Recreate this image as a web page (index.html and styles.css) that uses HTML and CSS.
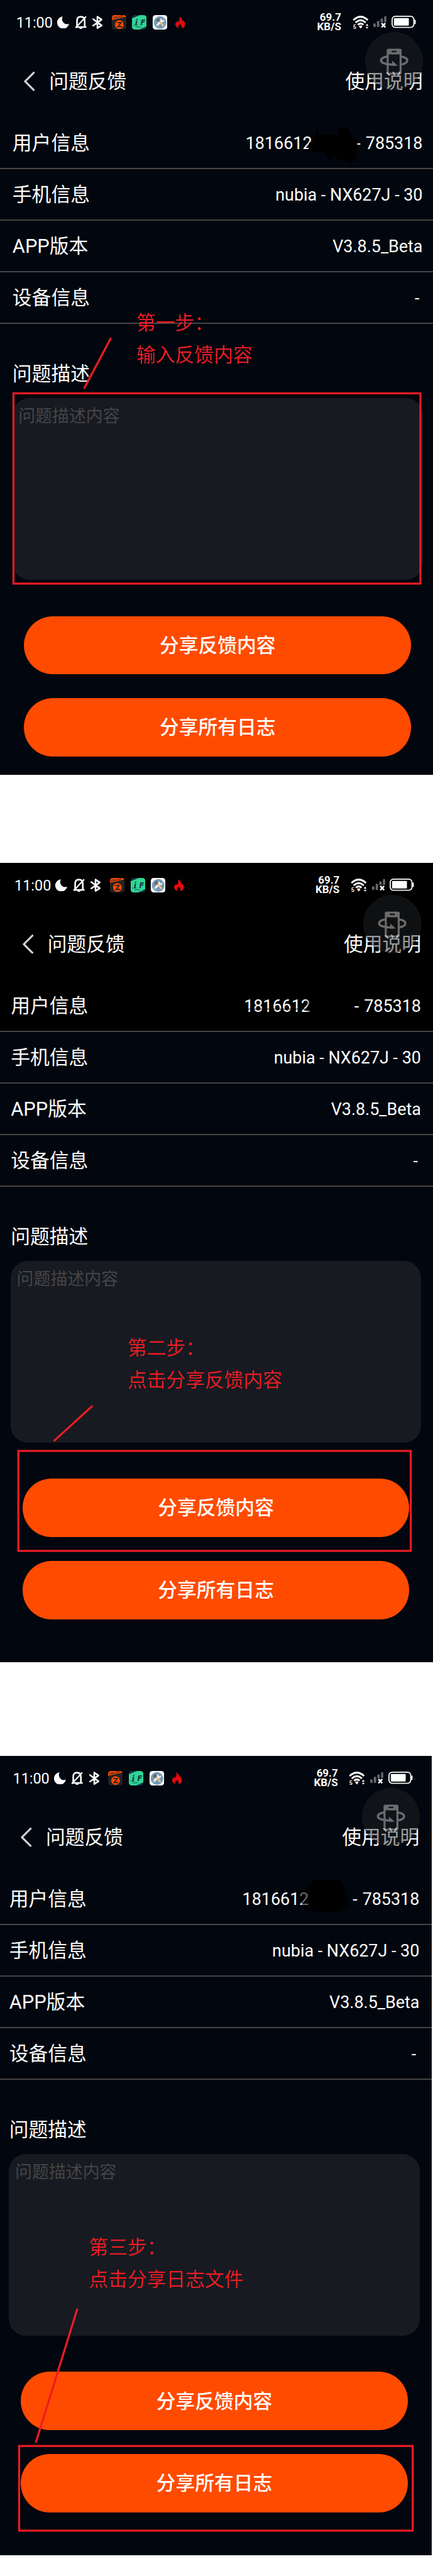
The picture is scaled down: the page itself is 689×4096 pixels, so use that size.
FILE: index.html
```html
<!DOCTYPE html>
<html lang="zh-CN">
<head>
<meta charset="utf-8">
<title>问题反馈</title>
<link rel="stylesheet" href="styles.css">
</head>
<body>
<svg class="defs" aria-hidden="true">
  <defs>
    <symbol id="moon" viewBox="0 0 30 30"><path d="M14 .5A15 15 0 1 0 29.500 18.500A12.500 12.500 0 0 1 14 .5Z" fill="#fff"/></symbol>
    <symbol id="mute" viewBox="0 0 30 33"><path d="M5.500 27V13C5.500 6 9 2.500 15 2.500S24.500 6 24.500 13V27M2 28H29" fill="none" stroke="#fff" stroke-width="4"/><path d="M28 2L2 30" stroke="#fff" stroke-width="3.400"/><path d="M10.500 29h9a4.500 4 0 0 1-9 0Z" fill="#fff"/></symbol>
    <symbol id="bt" viewBox="0 0 27 33"><path d="M2 8.500L23 24L12.500 30.500V2.500L23 9.500L2 24.500" fill="none" stroke="#fff" stroke-width="4" stroke-linejoin="round" stroke-linecap="round"/></symbol>
    <symbol id="zapp" viewBox="0 0 36 36"><clipPath id="zc"><rect width="36" height="36" rx="7"/></clipPath><g clip-path="url(#zc)"><rect width="36" height="36" fill="#232323"/><path d="M0 0H36V4L0 12Z" fill="#ff4b00"/><text x="2" y="9.500" font-size="6.500" font-weight="700" fill="#232323" textLength="27" transform="rotate(-11 2 9)">ZEBLAZE</text><circle cx="18.500" cy="23.500" r="10.800" fill="#ff4b00"/><path d="M13 18.500H23L15 28.500H25" fill="none" stroke="#232323" stroke-width="2.800"/></g></symbol>
    <symbol id="ifapp" viewBox="0 0 36 36"><clipPath id="ic"><rect width="36" height="36" rx="7"/></clipPath><g clip-path="url(#ic)"><rect width="36" height="36" fill="#17344a"/><path d="M0 8L20 0H36V28L18 36H0Z" fill="#2fd594"/><text x="8" y="25" font-size="20" font-weight="900" font-style="italic" fill="#17344a" textLength="24">iF</text><path d="M4 25H15M9 29.500H23" stroke="#17344a" stroke-width="1.200"/></g></symbol>
    <symbol id="tools" viewBox="0 0 36 36"><rect width="36" height="36" rx="7" fill="#fff"/><circle cx="18.300" cy="18.500" r="15.700" fill="#7699b5"/><path d="M11 25L22 14" stroke="#f1f3f5" stroke-width="5" stroke-linecap="round"/><path d="M21 7.500C18 10 18.500 16 22 17.500C26 19 29.500 16 28.500 11L25 14L22 12Z" fill="#f1f3f5"/><circle cx="11" cy="25.500" r="1.400" fill="#7699b5"/><path d="M15 13L27 27" stroke="#f5c27b" stroke-width="4"/><path d="M8 15C9 10 13 7 18 7L15 10L18 14L13.500 17L11.500 14Z" fill="#5f6468"/></symbol>
    <symbol id="fire" viewBox="0 0 25 30"><path d="M10 0C16 4 18 7 17.500 12L20 10C23 14 25 18 24 22C23 26 20 29 16 30C17 25 15 21 11.500 19C7 22 6 26 8.500 30C4 28 0 24 0 19C1 14 4 15 6 11C6 13 7 14 8 14C11 9 11 5 10 0Z" fill="#e60a0e"/></symbol>
    <symbol id="wifi" viewBox="0 0 40 33"><g fill="none" stroke="#fff" stroke-width="4.600"><path d="M2 11Q20-6 38 11"/><path d="M7.500 17.200Q20 5.500 32.500 17.200"/><path d="M13 22.500Q20 16 27 22.500"/></g><path d="M15.500 26.500Q20 22 24.500 26.500L20 32Z" fill="#fff"/><text x="1" y="32" font-size="14" font-weight="700" fill="#fff">5</text><path d="M32.500 25L36 20L39.500 25ZM32.500 27.500L36 32.500L39.500 27.500Z" fill="#fff"/></symbol>
    <symbol id="signal" viewBox="0 0 33 31"><g fill="#66686c"><rect x="0" y="19" width="6" height="9" rx="2"/><rect x="9" y="13" width="6" height="15" rx="2"/><rect x="18" y="7" width="6" height="9" rx="2"/><rect x="27" y="1" width="5.500" height="15" rx="2"/></g><path d="M20.500 18.500L30 28.500M30 18.500L20.500 28.500" stroke="#fff" stroke-width="4"/></symbol>
    <symbol id="battery" viewBox="0 0 61 31"><rect x="1.500" y="1.500" width="54" height="27.500" rx="8" fill="none" stroke="#fff" stroke-width="2.800"/><rect x="6" y="6" width="37" height="18.500" rx="2" fill="#fff"/><path d="M56 10h4v10.500h-4Z" fill="#fff"/></symbol>
    <symbol id="back" viewBox="0 0 27 48"><path d="M24.500 2.500L3 24L24.500 45.500" fill="none" stroke="#cfcfd1" stroke-width="5" stroke-linecap="round" stroke-linejoin="round"/></symbol>
    <symbol id="rotate" viewBox="0 0 144 144"><circle cx="72" cy="72" r="71.500" fill="#313538" fill-opacity=".3" stroke="#1b1f25"/><g opacity=".38"><g fill="none" stroke="#fff"><path d="M56 61C46 61.500 39.500 65.500 39.500 70.500C39.500 76.500 51 80.500 74 81" stroke-width="5.500"/><path d="M88 61C98 61.500 104.500 65.500 104.500 70.500C104.500 75.500 98 79 89 80.500" stroke-width="5.500"/><rect x="56" y="44" width="32" height="59" rx="2" stroke-width="5"/></g><path d="M55 43H66V50H78V43H89V55.500H55Z" fill="#fff"/><path d="M66 50H78V55H66Z" fill="#fff"/><path d="M67 71L81 83.500H67Z" fill="#fff"/></g></symbol>
  </defs>
</svg>

<section class="screen screen-1">
  <div class="content">
    <header class="status">
      <span class="time">11:00</span>
      <svg class="i-moon"><use href="#moon"/></svg><svg class="i-mute"><use href="#mute"/></svg><svg class="i-bt"><use href="#bt"/></svg><svg class="i-app first"><use href="#zapp"/></svg><svg class="i-app"><use href="#ifapp"/></svg><svg class="i-app"><use href="#tools"/></svg><svg class="i-fire"><use href="#fire"/></svg>
      <span class="speed">69.7<br>KB/S</span>
      <svg class="i-wifi"><use href="#wifi"/></svg><svg class="i-signal"><use href="#signal"/></svg><svg class="i-battery"><use href="#battery"/></svg>
    </header>
    <nav class="appbar"><svg class="i-back"><use href="#back"/></svg><h1>问题反馈</h1><a class="help">使用说明</a></nav>
    <svg class="float"><use href="#rotate"/></svg>
    <div class="row"><span>用户信息</span><span class="value account">1816612<i class="masked"></i> - 785318</span></div>
    <div class="row"><span>手机信息</span><span class="value">nubia - NX627J - 30</span></div>
    <div class="row"><span>APP版本</span><span class="value">V3.8.5_Beta</span></div>
    <div class="row"><span>设备信息</span><span class="value dash">-</span></div>
    <h2>问题描述</h2>
    <div class="field">问题描述内容</div>
    <div class="actions"><div class="button">分享反馈内容</div><div class="button">分享所有日志</div></div>
  </div>
  <svg class="marks" viewBox="0 0 1074 1921">
    <path d="M765 375L767 354L777 350L779 334L784 334L790 312H793L788 334H839L841 318Q856 312 867 322L876 348L886 346L888 366L881 395Q871 412 860 403L852 397L838 396L833 383L816 398L806 380L800 376Z" fill="#000" fill-opacity=".94"/>
    <path d="M274.500 840L209.500 962" class="line"/>
    <rect x="33.500" y="975.500" width="1010" height="472" class="frame"/>
  </svg>
  <p class="note">第一步：<br>输入反馈内容</p>
</section>

<section class="screen screen-2">
  <div class="content">
    <header class="status">
      <span class="time">11:00</span>
      <svg class="i-moon"><use href="#moon"/></svg><svg class="i-mute"><use href="#mute"/></svg><svg class="i-bt"><use href="#bt"/></svg><svg class="i-app first"><use href="#zapp"/></svg><svg class="i-app"><use href="#ifapp"/></svg><svg class="i-app"><use href="#tools"/></svg><svg class="i-fire"><use href="#fire"/></svg>
      <span class="speed">69.7<br>KB/S</span>
      <svg class="i-wifi"><use href="#wifi"/></svg><svg class="i-signal"><use href="#signal"/></svg><svg class="i-battery"><use href="#battery"/></svg>
    </header>
    <nav class="appbar"><svg class="i-back"><use href="#back"/></svg><h1>问题反馈</h1><a class="help">使用说明</a></nav>
    <svg class="float"><use href="#rotate"/></svg>
    <div class="row"><span>用户信息</span><span class="value account">1816612<i class="masked"></i> - 785318</span></div>
    <div class="row"><span>手机信息</span><span class="value">nubia - NX627J - 30</span></div>
    <div class="row"><span>APP版本</span><span class="value">V3.8.5_Beta</span></div>
    <div class="row"><span>设备信息</span><span class="value dash">-</span></div>
    <h2>问题描述</h2>
    <div class="field">问题描述内容</div>
    <div class="actions"><div class="button">分享反馈内容</div><div class="button">分享所有日志</div></div>
  </div>
  <svg class="marks" viewBox="0 0 1074 1983">
    <defs><linearGradient id="fade"><stop offset="0" stop-color="#000" stop-opacity="0"/><stop offset="1" stop-color="#000"/></linearGradient></defs>
    <rect x="758" y="330" width="20" height="50" fill="url(#fade)"/>
    <path d="M608 362.500H770" stroke="#000" stroke-width="1.500"/>
    <path d="M228 1348L135 1433" class="line"/>
    <rect x="45.500" y="1458.500" width="974" height="248" class="frame"/>
  </svg>
  <p class="note">第二步：<br>点击分享反馈内容</p>
</section>

<section class="screen screen-3">
  <div class="content">
    <header class="status">
      <span class="time">11:00</span>
      <svg class="i-moon"><use href="#moon"/></svg><svg class="i-mute"><use href="#mute"/></svg><svg class="i-bt"><use href="#bt"/></svg><svg class="i-app first"><use href="#zapp"/></svg><svg class="i-app"><use href="#ifapp"/></svg><svg class="i-app"><use href="#tools"/></svg><svg class="i-fire"><use href="#fire"/></svg>
      <span class="speed">69.7<br>KB/S</span>
      <svg class="i-wifi"><use href="#wifi"/></svg><svg class="i-signal"><use href="#signal"/></svg><svg class="i-battery"><use href="#battery"/></svg>
    </header>
    <nav class="appbar"><svg class="i-back"><use href="#back"/></svg><h1>问题反馈</h1><a class="help">使用说明</a></nav>
    <svg class="float"><use href="#rotate"/></svg>
    <div class="row"><span>用户信息</span><span class="value account">1816612<i class="masked"></i> - 785318</span></div>
    <div class="row"><span>手机信息</span><span class="value">nubia - NX627J - 30</span></div>
    <div class="row"><span>APP版本</span><span class="value">V3.8.5_Beta</span></div>
    <div class="row"><span>设备信息</span><span class="value dash">-</span></div>
    <h2>问题描述</h2>
    <div class="field">问题描述内容</div>
    <div class="actions"><div class="button">分享反馈内容</div><div class="button">分享所有日志</div></div>
  </div>
  <svg class="marks" viewBox="0 0 1074 1983">
    <path d="M738 336L758 330L764 320L776 316V304L790 308H849L851 320L857 322V345L866 352V378L838 388V389H768Q756 386 750 370Z" fill="#000" fill-opacity=".6"/>
    <path d="M774 305L790 308H840L849 320L855 322V365L838 384H785L770 375V320L776 316Z" fill="#000" fill-opacity=".85"/>
    <path d="M191.500 1373L89.500 1701" class="line"/>
    <rect x="47.500" y="1711.500" width="977" height="210" class="frame"/>
  </svg>
  <p class="note">第三步：<br>点击分享日志文件</p>
</section>
</body>
</html>
```

FILE: styles.css
```css
/* 1rem equals 100 design pixels */
html {
  font-size: 64.11px;
}

body {
  margin: 0;
  background: #fff;
  color: #fff;
  font-family: Roboto, "Noto Sans CJK SC", sans-serif;
  height: 63.89rem;
  overflow: hidden;
}

.defs {
  display: block;
  width: 0;
  height: 0;
}

.defs text {
  font-family: Roboto, sans-serif;
}

.screen {
  position: relative;
  overflow: hidden;
  background: #02060e;
}

.screen-1 {
  height: 19.21rem;
  margin-bottom: 2.19rem;
}

.screen-2 {
  height: 19.83rem;
  margin-bottom: 2.32rem;
  background: linear-gradient(#000 4.16rem, #02060e 4.16rem);
}

.screen-3 {
  height: 19.83rem;
  width: 10.72rem;
}

.content {
  position: relative;
  width: 10.84rem;
}

.screen-2 .content {
  margin-left: -.04rem;
}

.screen-3 .content {
  margin-left: -.08rem;
}

.status {
  display: flex;
  align-items: center;
  box-sizing: border-box;
  height: 1.1rem;
  padding-left: .4rem;
}

.status svg {
  flex: none;
}

.time {
  width: 1.02rem;
  font-size: .365rem;
  line-height: 1;
  padding-top: .04rem;
}

.i-moon { width: .3rem; height: .3rem; }
.i-mute { width: .3rem; height: .33rem; margin-left: .13rem; }
.i-bt { width: .27rem; height: .33rem; margin-left: .14rem; }
.i-app { width: .36rem; height: .36rem; margin-left: .15rem; }
.i-app.first { margin-left: .21rem; }
.i-fire { width: .25rem; height: .3rem; margin-left: .21rem; }

.speed {
  width: 3.86rem;
  font-size: .265rem;
  font-weight: 700;
  line-height: .235rem;
  text-align: right;
}

.i-wifi { width: .4rem; height: .33rem; margin-left: .275rem; }
.i-signal { width: .33rem; height: .31rem; margin-left: .13rem; }
.i-battery { width: .61rem; height: .31rem; margin-left: .11rem; }

.appbar {
  display: flex;
  align-items: center;
  box-sizing: border-box;
  height: 1.81rem;
  padding: .06rem .35rem 0 .6rem;
}

.i-back {
  width: .27rem;
  height: .48rem;
  margin: -.04rem .35rem 0 0;
}

h1,
h2,
.help {
  margin: 0;
  font-size: .48rem;
  font-weight: 400;
  line-height: 1;
}

.help {
  margin-left: auto;
}

.float {
  position: absolute;
  left: 9.06rem;
  top: .8rem;
  width: 1.44rem;
  height: 1.44rem;
}

/* Text below the floating ball is dimmed by it */
.float {
  backdrop-filter: brightness(.78);
  border-radius: 50%;
}

.row {
  display: flex;
  align-items: center;
  justify-content: space-between;
  box-sizing: border-box;
  height: 1.28rem;
  padding: .05rem .35rem 0 .31rem;
  border-bottom: .032rem solid #464545;
  font-size: .48rem;
  line-height: 1;
}

.value {
  font-size: .42rem;
}

.account {
  word-spacing: .02rem;
}

.dash {
  padding-right: .08rem;
}

.masked {
  display: inline-block;
  width: .965rem;
}

h2 {
  box-sizing: border-box;
  height: 1.85rem;
  padding: 1.02rem 0 0 .31rem;
}

.field {
  box-sizing: border-box;
  width: 10.19rem;
  height: 4.5rem;
  margin-left: .305rem;
  padding: .25rem .15rem;
  border-radius: .42rem;
  background: #171a21;
  color: #454545;
  font-size: .42rem;
  line-height: 1;
}

.actions {
  display: flex;
  flex-direction: column;
  gap: .6rem;
  margin: .9rem 0 0 .6rem;
  width: 9.6rem;
}

.button {
  display: flex;
  align-items: center;
  justify-content: center;
  box-sizing: border-box;
  height: 1.44rem;
  padding-top: .04rem;
  border-radius: .72rem;
  background: #ff4b00;
  font-size: .48rem;
  font-weight: 500;
  line-height: 1;
}

/* Tutorial annotations drawn over each screen */
.marks {
  position: absolute;
  left: 0;
  top: 0;
  width: 10.74rem;
  height: 100%;
}

.line {
  stroke: #ed1c24;
  stroke-width: 5;
  stroke-linecap: round;
}

.frame {
  fill: none;
  stroke: #ed1c24;
  stroke-width: 5;
}

.note {
  position: absolute;
  margin: 0;
  color: #ed1c24;
  font-size: .48rem;
  line-height: .8rem;
}

.screen-1 .note { left: 3.39rem; top: 7.61rem; }
.screen-2 .note { left: 3.17rem; top: 11.64rem; }
.screen-3 .note { left: 2.21rem; top: 11.79rem; }
```
